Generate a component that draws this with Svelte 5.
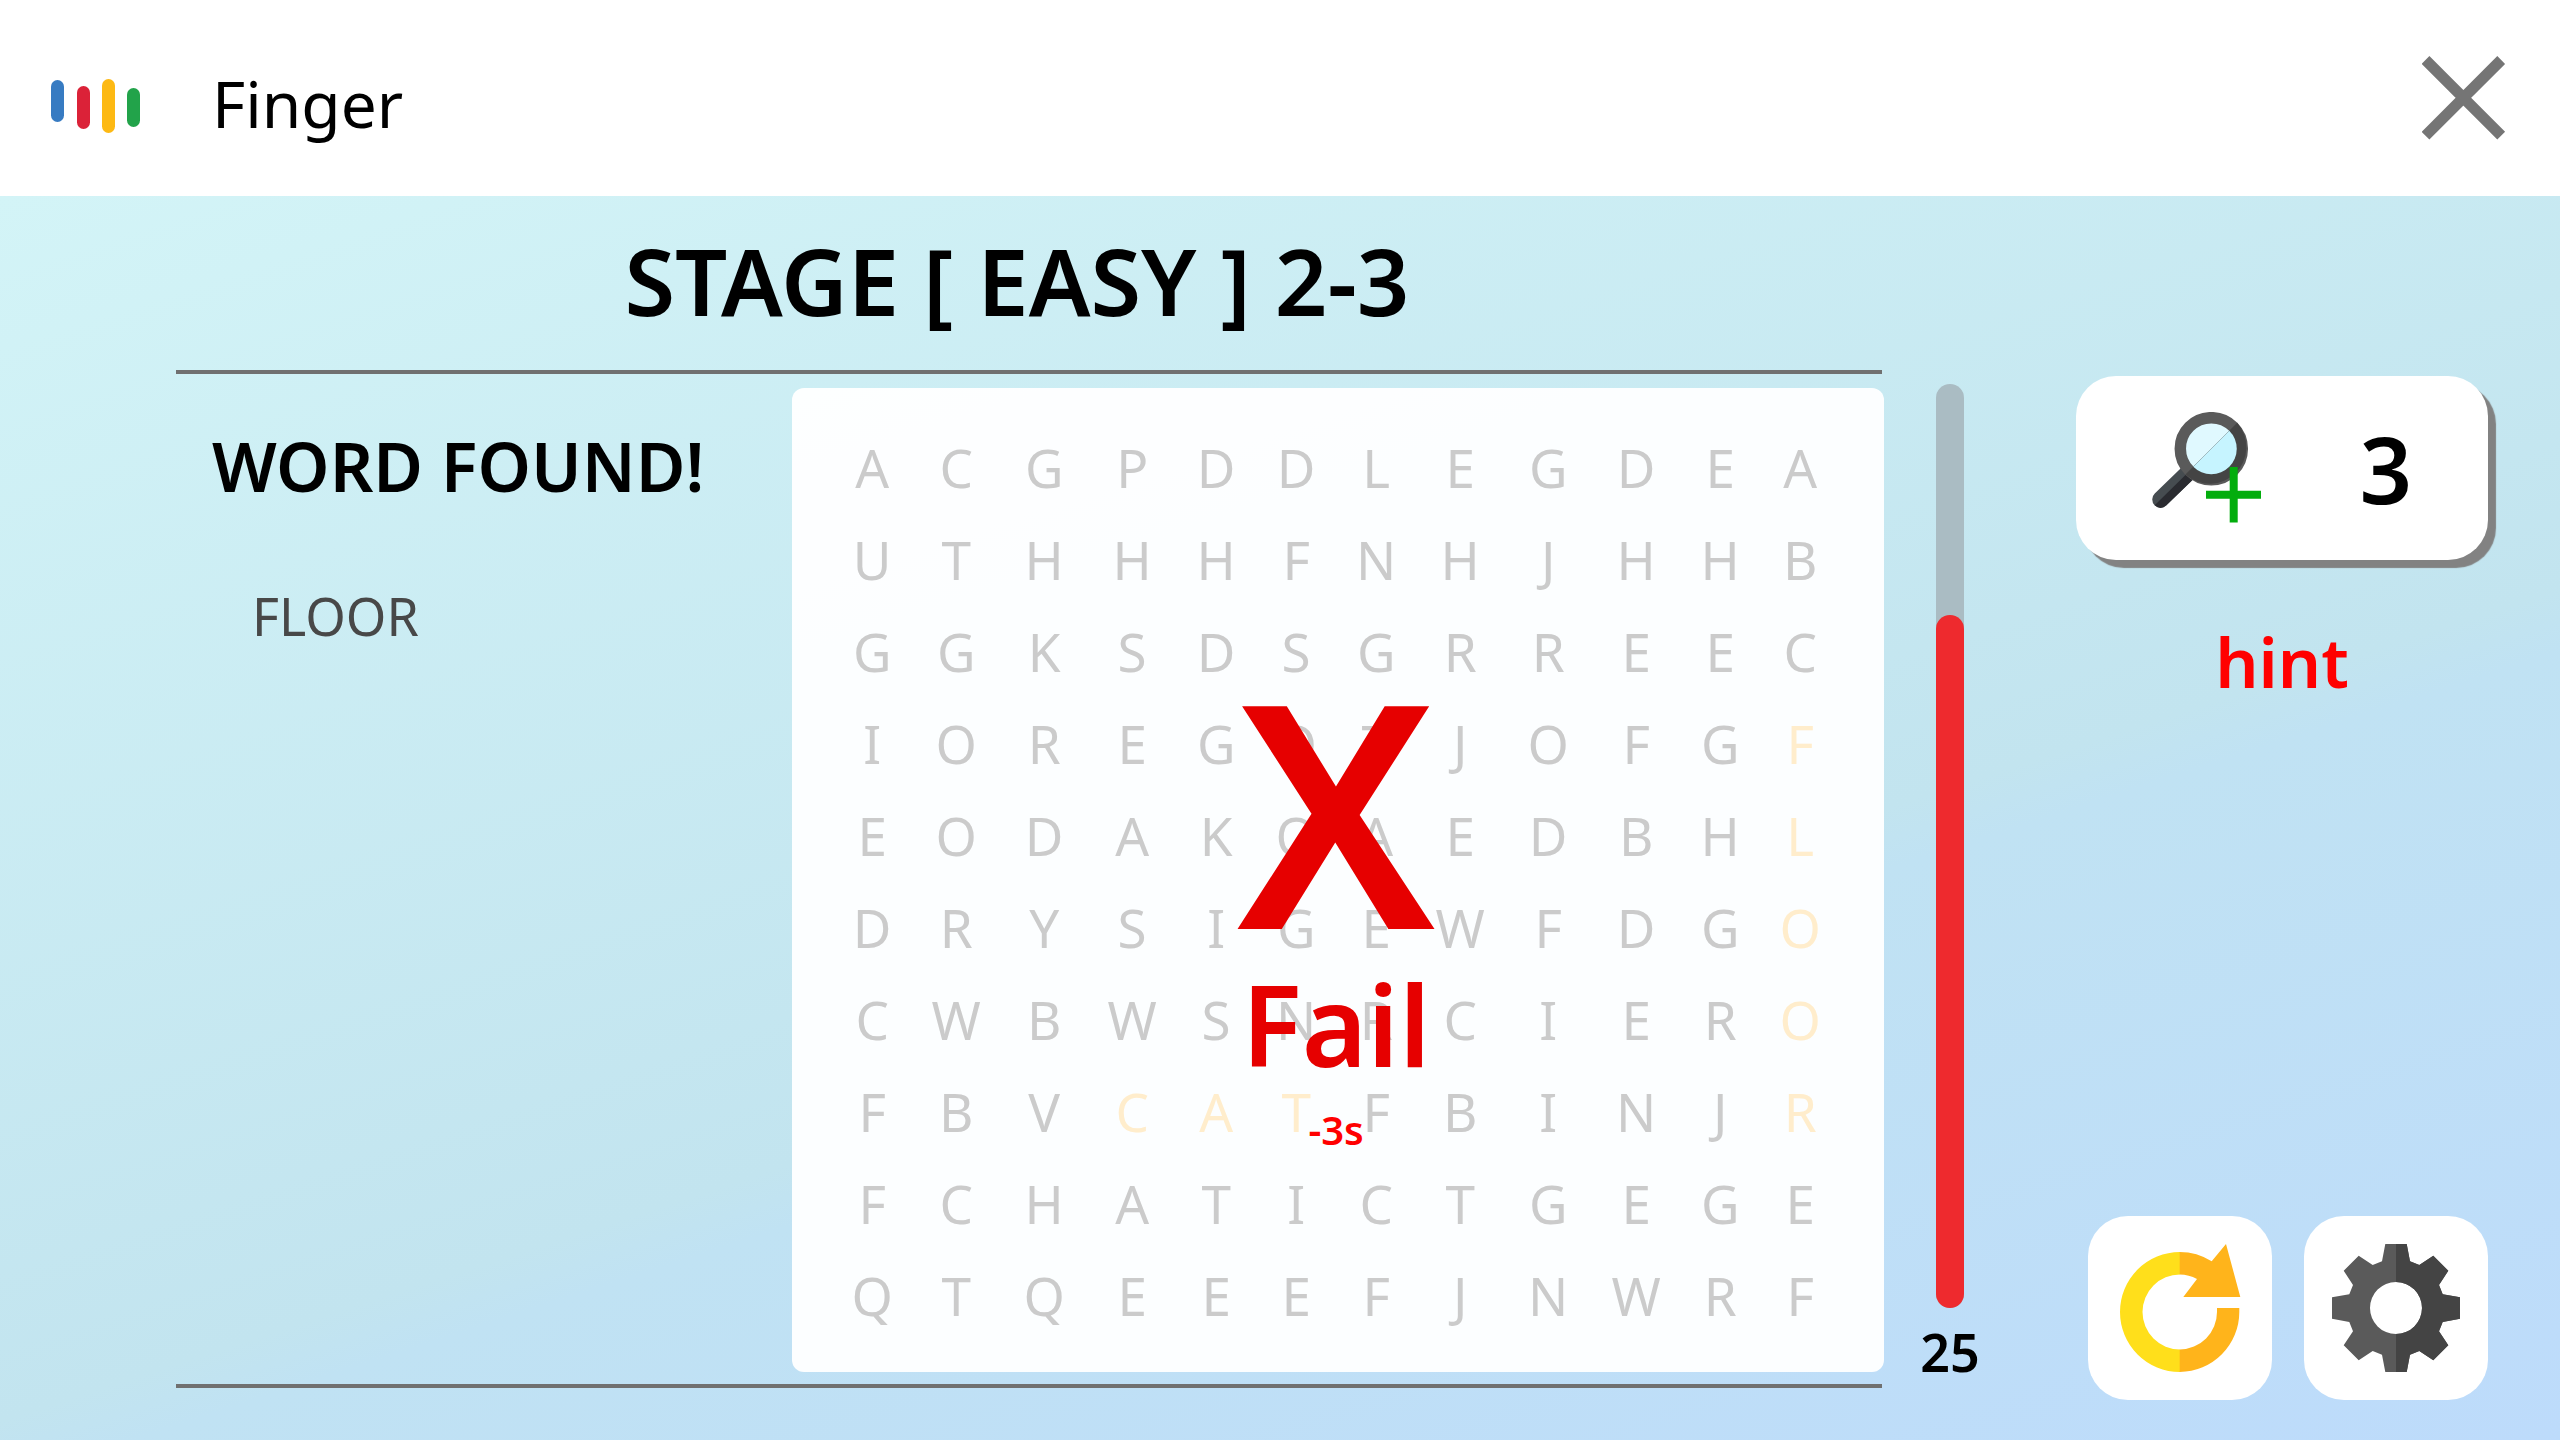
<script lang="ts">
  const rows: string[] = [
    'ACGPDDLEGDEA',
    'UTHHHFNHJHHB',
    'GGKSDSGRREEC',
    'IOREGOTJOFGF',
    'EODAKOAEDBHL',
    'DRYSIGEWFDGO',
    'CWBWSNRCIERO',
    'FBVCATFBINJR',
    'FCHATICTGEGE',
    'QTQEEEFJNWRF'
  ];

  const wideColumns = [1, 2, 3, 7, 8, 9];
  const marked = new Set(['3-11', '4-11', '5-11', '6-11', '7-11', '7-3', '7-4', '7-5']);
  const found: string[] = ['FLOOR'];

  let hints = $state(3);
  const seconds = 25;
  const percentLeft = 75;
</script>

<div class="app">
  <header>
    <svg class="logo" viewBox="0 0 92 56" aria-hidden="true">
      <rect x="1" y="2" width="13" height="42" rx="6.5" fill="#377bc2" />
      <rect x="27" y="8" width="13" height="43" rx="6.5" fill="#db2238" />
      <rect x="52" y="1" width="13" height="54" rx="6.5" fill="#fdb913" />
      <rect x="77" y="10" width="13" height="39" rx="6.5" fill="#22a34a" />
    </svg>
    <span class="brand">Finger</span>
    <button class="close" aria-label="Close">
      <svg viewBox="0 0 84 84" aria-hidden="true">
        <path d="M3.500 4 79.200 79.700M79.200 4 3.500 79.700" stroke="#757575" stroke-width="11" />
      </svg>
    </button>
  </header>

  <main>
    <section class="stage">
      <h1>STAGE [ EASY ] 2-3</h1>
      <div class="play">
        <aside class="words">
          <h2>WORD FOUND!</h2>
          <ul>
            {#each found as word}
              <li>{word}</li>
            {/each}
          </ul>
        </aside>

        <div class="board">
          <table aria-label="Letters">
            <colgroup>
              {#each rows[0].split('') as _, c}
                <col class={wideColumns.includes(c) ? 'wide' : 'narrow'} />
              {/each}
            </colgroup>
            <tbody>
              {#each rows as row, r}
                <tr>
                  {#each row.split('') as letter, c}
                    <td class:marked={marked.has(`${r}-${c}`)}>{letter}</td>
                  {/each}
                </tr>
              {/each}
            </tbody>
          </table>
          <div class="result" role="status">
            <span class="cross">X</span>
            <span class="fail">Fail</span>
            <span class="penalty">-3s</span>
          </div>
        </div>
      </div>
    </section>

    <div class="timer">
      <div class="track">
        <div class="level" style="height: {percentLeft}%"></div>
      </div>
      <span class="seconds">{seconds}</span>
    </div>

    <div class="side">
      <button class="hint" aria-labelledby="hint-label" onclick={() => (hints = Math.max(0, hints - 1))}>
        <svg class="lens" viewBox="1 1 112 112" aria-hidden="true">
          <path d="M9.500 88.500 42 57" stroke="#464c50" stroke-width="16.500" stroke-linecap="round" />
          <path d="M3.700 94.300 36 62.500 42 68.500 15.300 94.300Q9.500 99.500 3.700 94.300Z" fill="#2a2b30" />
          <circle cx="60.300" cy="37.700" r="31" fill="#e0f9ff" stroke="#5a5a5a" stroke-width="11.500" />
          <path d="M86.200 11.800A36.700 36.700 0 0 1 34.400 63.600Z" fill="#444" />
          <path d="M78.300 19.700A25.400 25.400 0 0 1 42.300 55.700Z" fill="#c6f4ff" />
          <path d="M82.700 56V111.500M55 83.700H110" stroke="#03ad0d" stroke-width="8" />
        </svg>
        <span>{hints}</span>
      </button>
      <span class="hint-label" id="hint-label">hint</span>

      <div class="actions">
        <button aria-label="Restart">
          <svg viewBox="-4 0 128 128" aria-hidden="true">
            <path d="M60 8A60 60 0 0 0 60 128V105.500A37.500 37.500 0 0 1 60 30.500Z" fill="#ffdf1b" />
            <path d="M59.700 8A60 60 0 0 1 91.700 17.300L106 0 120.300 53H63.300L77 35A37.500 37.500 0 0 0 59.700 30.500Z" fill="#ffb41b" />
            <path d="M97 64H119.300V68A60 60 0 0 1 59.700 128V105.500A37.500 37.500 0 0 0 97 68Z" fill="#ffb41b" />
          </svg>
        </button>
        <button aria-label="Settings">
          <svg viewBox="0 0 128 128" aria-hidden="true">
            <path
              fill="#5a5a5a"
              fill-rule="evenodd"
              d="M53.300 0H74.700L78 17.300 87.300 21 101.300 11.700 116.300 26.700 107 41 110.700 50.300 128 53.300V74.700L110.700 78 107 87.300 116.300 101.300 101.300 116.300 87.300 107 78 110.700 74.700 128H53.300L50 110.700 40.700 107 26.700 116.300 11.700 101.300 21 87.300 17.300 78 0 74.700V53.300L17.300 50.300 21 41 11.700 26.700 26.700 11.700 40.700 21 50 17.300ZM64 38A26 26 0 1 0 64 90 26 26 0 0 0 64 38Z"
            />
            <path
              fill="#444"
              d="M64 0H74.700L78 17.300 87.300 21 101.300 11.700 116.300 26.700 107 41 110.700 50.300 128 53.300V74.700L110.700 78 107 87.300 116.300 101.300 101.300 116.300 87.300 107 78 110.700 74.700 128H64V90A26 26 0 0 0 64 38Z"
            />
          </svg>
        </button>
      </div>
    </div>
  </main>
</div>

<style>
  :global(body) {
    margin: 0;
  }

  .app {
    min-height: 100vh;
    display: flex;
    flex-direction: column;
    font-family: 'Noto Sans', sans-serif;
    color: #000;
    background: #fff;
  }

  button {
    border: 0;
    padding: 0;
    font: inherit;
    color: inherit;
    background: #fff;
    cursor: pointer;
  }

  svg {
    display: block;
    fill: none;
  }

  header {
    display: flex;
    align-items: center;
    height: 196px;
    padding: 0 54px 0 50px;
  }

  .logo {
    width: 92px;
    height: 56px;
    margin-top: 16px;
  }

  .brand {
    margin: 12px 0 0 70px;
    font-size: 64px;
    line-height: 88px;
  }

  .close {
    width: 84px;
    height: 84px;
    margin-left: auto;
  }

  main {
    flex: 1;
    display: flex;
    padding: 0 72px 0 176px;
    background: linear-gradient(162deg, #d3f4f7 0%, #c2e4ef 59%, #c0e2f3 62%, #bddbfb 100%);
  }

  .stage {
    flex: 1;
  }

  h1 {
    margin: 0;
    padding: 20px 24px 24px 0;
    text-align: center;
    font-size: 92px;
    font-weight: 600;
    line-height: 130px;
  }

  .play {
    display: flex;
    justify-content: space-between;
    padding: 14px 0 12px;
    border-top: 4px solid #707070;
    border-bottom: 4px solid #707070;
  }

  .words {
    flex: 1;
    padding: 32px 0 0 36px;
  }

  h2 {
    margin: 0;
    font-size: 68px;
    font-weight: 600;
    line-height: 92px;
  }

  ul {
    margin: 0;
    padding: 67px 0 0 40px;
    list-style: none;
  }

  li {
    font-size: 52px;
    line-height: 74px;
    color: #484848;
  }

  .board {
    position: relative;
    flex: none;
    width: 64%;
    margin-right: -2px;
    padding: 34px 44px 30px 40px;
    box-sizing: border-box;
    border-radius: 12px;
    background: rgba(255, 255, 255, 0.95);
  }

  table {
    width: 100%;
    table-layout: fixed;
    border-collapse: collapse;
  }

  .wide {
    width: 88px;
  }

  .narrow {
    width: 80px;
  }

  td {
    height: 92px;
    padding: 0;
    text-align: center;
    font-size: 53px;
    line-height: 92px;
    color: #cbcbcb;
  }

  .marked {
    color: #ffedcc;
  }

  .result {
    position: absolute;
    inset: 0;
    display: flex;
    flex-direction: column;
    align-items: center;
    justify-content: center;
    padding: 47px 4px 0 0;
    font-weight: 600;
    color: #e60000;
  }

  .cross {
    font-size: 312px;
    line-height: 316px;
  }

  .fail {
    font-size: 112px;
    line-height: 116px;
  }

  .penalty {
    margin-top: 20px;
    font-size: 40px;
    line-height: 56px;
    color: #f00;
  }

  .timer {
    width: 136px;
    display: flex;
    flex-direction: column;
    align-items: center;
    padding: 188px 0 56px;
  }

  .track {
    flex: 1;
    width: 28px;
    display: flex;
    flex-direction: column;
    justify-content: flex-end;
    border-radius: 14px;
    background: #aabcc3;
  }

  .level {
    border-radius: 14px;
    background: #ee2a2e;
  }

  .seconds {
    margin-top: 12px;
    font-size: 52px;
    font-weight: 600;
    line-height: 64px;
  }

  .side {
    width: 412px;
    display: flex;
    flex-direction: column;
    align-items: flex-end;
    margin-left: 58px;
    padding: 180px 0 40px;
    box-sizing: border-box;
  }

  .hint {
    width: 100%;
    height: 184px;
    display: flex;
    align-items: center;
    justify-content: space-between;
    padding: 0 76px;
    border-radius: 40px;
    box-shadow: 8px 8px 1px #828282;
    font-size: 92px;
    font-weight: 600;
  }

  .lens {
    width: 112px;
    height: 112px;
  }

  .hint-label {
    align-self: center;
    margin-top: 56px;
    font-size: 68px;
    font-weight: 600;
    line-height: 92px;
    color: #f00;
  }

  .actions {
    display: flex;
    gap: 32px;
    margin-top: auto;
  }

  .actions button {
    width: 184px;
    height: 184px;
    padding: 28px;
    border-radius: 40px;
  }
</style>
